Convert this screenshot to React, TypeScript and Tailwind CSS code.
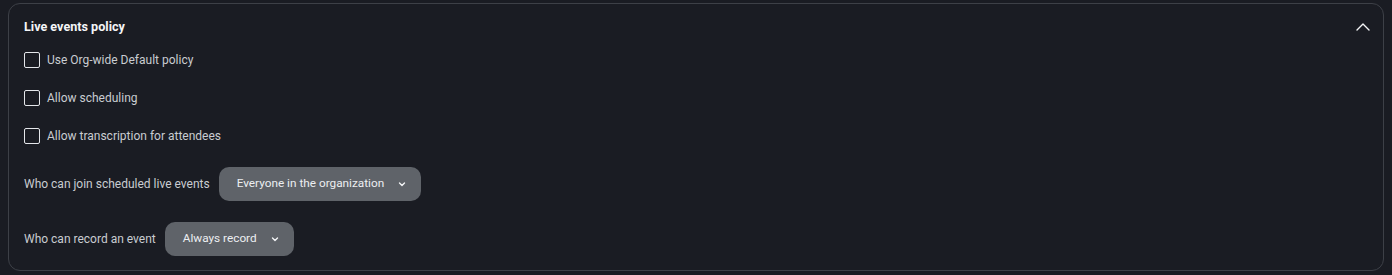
import { useState } from "react";

function ChevronDown() {
    return (
        <svg width="10" height="10" viewBox="0 0 10 10" fill="none" className="ml-[13px]">
            <path d="M2.5 4 L5 6.5 L7.5 4" stroke="#f3f4f6" strokeWidth="1.4" strokeLinecap="round" strokeLinejoin="round" />
        </svg>
    );
}

function Check({ label }: { label: string }) {
    const [on, setOn] = useState(false);
    return (
        <label className="flex items-center h-[38px] gap-[7px] cursor-pointer">
            <span
                onClick={() => setOn(!on)}
                className="w-4 h-4 rounded-[2px] border-[1.5px] border-[#e4e6ea] flex items-center justify-center"
            >
                {on && <span className="w-2 h-2 bg-[#e4e6ea]" />}
            </span>
            <span className="text-[12px] text-[#c9ccd1]">{label}</span>
        </label>
    );
}

function SelectRow({ label, value }: { label: string; value: string }) {
    return (
        <div className="flex items-center gap-[9px]">
            <span className="text-[12px] text-[#c9ccd1]">{label}</span>
            <button className="flex items-center h-[34px] pl-[18px] pr-[14px] rounded-[10px] bg-[#5f6369] text-[11.8px] text-[#eceef1]">
                {value}
                <ChevronDown />
            </button>
        </div>
    );
}

export default function App() {
    return (
        <div className="w-[1392px] h-[275px] bg-[#1a1c23] pt-[3px] px-[8px] font-['Roboto',sans-serif]">
            <div className="border border-[#3d4047] rounded-[12px] h-[268px] pl-[15px] pr-[13px] pt-[13px]">
                <div className="flex items-center justify-between h-5">
                    <div className="text-[12.6px] font-bold text-[#f4f5f7]">Live events policy</div>
                    <svg width="14" height="14" viewBox="0 0 14 14" fill="none">
                        <path d="M1 10 L7 4 L13 10" stroke="#f3f4f6" strokeWidth="1.4" strokeLinecap="round" strokeLinejoin="round" />
                    </svg>
                </div>
                <div className="flex flex-col mt-[4px]">
                    <Check label="Use Org-wide Default policy" />
                    <Check label="Allow scheduling" />
                    <Check label="Allow transcription for attendees" />
                </div>
                <div className="mt-[12px]">
                    <SelectRow label="Who can join scheduled live events" value="Everyone in the organization" />
                </div>
                <div className="mt-[21px]">
                    <SelectRow label="Who can record an event" value="Always record" />
                </div>
            </div>
        </div>
    );
}
